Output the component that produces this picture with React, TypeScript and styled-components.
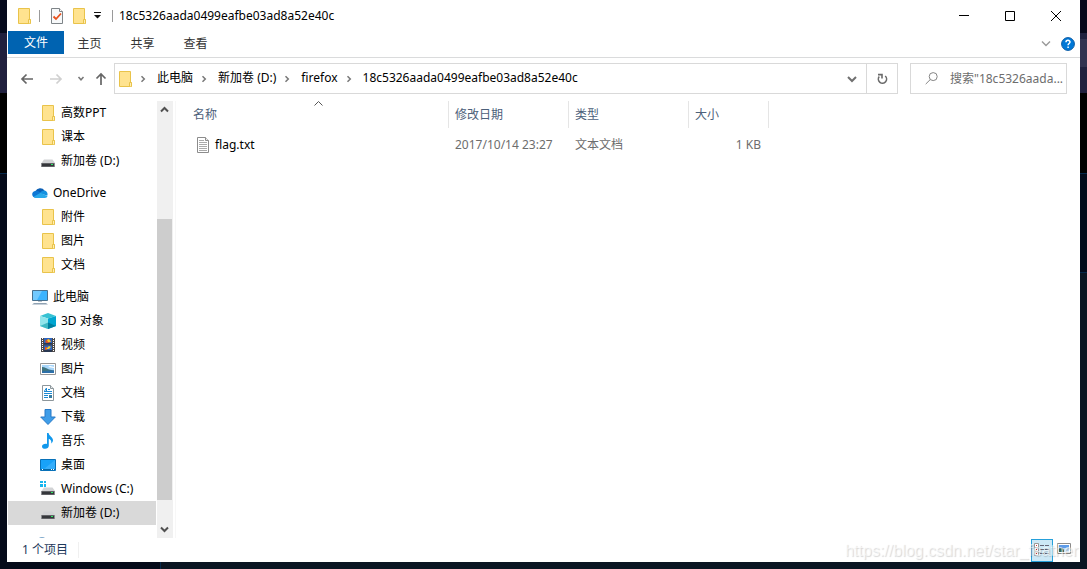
import React from "react";
import styled, { createGlobalStyle } from "styled-components";

const GlobalStyle = createGlobalStyle`
  * { box-sizing: border-box; }
  body { margin: 0; background: #040a19; }
  body, button, input, table {
    font-family: "Noto Sans", "Noto Sans CJK SC", sans-serif;
    font-size: 12px;
    line-height: 16px;
  }
  button { margin: 0; padding: 0; border: 0; background: none; color: inherit; }
  a { color: inherit; text-decoration: none; }
  ul, ol { margin: 0; padding: 0; list-style: none; }
  svg { display: block; flex: none; }
`;

const Desktop = styled.div`
  height: 100vh;
  padding: 0 7px 7px;
  background:
    linear-gradient(#07071a 33px, #20203e 33px 39px, #323250 39px 67px, #20203e 67px 93px, #000 93px 173px, #06284a 173px 174px, #020a1a 174px 272px, #06284a 272px 273px, #0a1522 273px) right / 7px 100% no-repeat,
    linear-gradient(#050a1c 33px, #20203e 33px 93px, #000 93px 173px, #06284a 173px 174px, #040a19 174px) left / 7px 100% no-repeat,
    linear-gradient(90deg, #040a19 160px, #06284a 160px 161px, #0a1522 161px);
`;

const Window = styled.div`
  position: relative;
  display: flex;
  flex-direction: column;
  height: 100%;
  background: #fff;
  color: #000;
`;

const TitleBar = styled.header`
  display: flex;
  align-items: center;
  justify-content: space-between;
  height: 31px;
  flex: none;
  padding-right: 1px;
`;

const QuickAccess = styled.div`
  display: flex;
  align-items: center;
  padding-left: 10px;
`;

const QuickButton = styled.button<{ $narrow?: boolean }>`
  display: flex;
  justify-content: center;
  width: ${(p) => (p.$narrow ? 14 : 22)}px;
`;

const Separator = styled.span`
  width: 1px;
  height: 12px;
  margin: 0 6px 0 8px;
  background: #9a9a9a;
`;

const Title = styled.h1`
  margin: 0;
  font-size: 12px;
  font-weight: 400;
`;

const CaptionButtons = styled.div`
  display: flex;
`;

const CaptionButton = styled.button`
  display: flex;
  align-items: center;
  justify-content: center;
  width: 46px;
  height: 31px;
`;

const Ribbon = styled.nav`
  display: flex;
  align-items: flex-start;
  height: 27px;
  flex: none;
  padding: 0 5px 0 1px;
  border-bottom: 1px solid #dadbdc;
`;

const Tab = styled.button<{ $primary?: boolean }>`
  width: ${(p) => (p.$primary ? 56 : 53)}px;
  height: 23px;
  padding: ${(p) => (p.$primary ? "0" : "2px 2px 0 0")};
  background: ${(p) => (p.$primary ? "#0063b1" : "transparent")};
  color: ${(p) => (p.$primary ? "#fff" : "#333")};
`;

const RibbonTools = styled.div`
  display: flex;
  align-items: center;
  gap: 10px;
  height: 26px;
  margin-left: auto;
`;

const AddressRow = styled.div`
  display: flex;
  align-items: stretch;
  height: 31px;
  flex: none;
  margin-top: 5px;
  padding-right: 13px;
`;

const NavButtons = styled.div`
  display: flex;
  align-items: center;
  width: 107px;
  padding-left: 9px;
  flex: none;
`;

const NavButton = styled.button<{ $width: number }>`
  display: flex;
  justify-content: center;
  width: ${(p) => p.$width}px;
`;

const AddressBox = styled.div`
  display: flex;
  align-items: center;
  flex: 1;
  min-width: 0;
  padding-left: 3px;
  border: 1px solid #d9d9d9;
`;

const Crumbs = styled.ol`
  display: flex;
  flex: 1;
  min-width: 0;
  padding-bottom: 2px;
  overflow: hidden;
`;

const Crumb = styled.li`
  display: flex;
  align-items: center;
  white-space: nowrap;
`;

const CrumbArrow = styled.span`
  display: flex;
  justify-content: center;
  width: 25px;
  padding: 2px 3px 0 0;
`;

const AddressButton = styled.button<{ $divided?: boolean }>`
  display: flex;
  align-items: center;
  justify-content: center;
  align-self: stretch;
  width: ${(p) => (p.$divided ? 31 : 28)}px;
  border-left: ${(p) => (p.$divided ? "1px solid #d9d9d9" : "0")};
`;

const SearchBox = styled.label`
  display: flex;
  align-items: center;
  gap: 12px;
  width: 157px;
  flex: none;
  margin-left: 12px;
  padding-left: 14px;
  border: 1px solid #d9d9d9;
`;

const SearchInput = styled.input`
  flex: 1;
  min-width: 0;
  padding: 0;
  border: 0;
  outline: 0;
  background: none;
  text-overflow: ellipsis;
  &::placeholder { color: #6d6d6d; opacity: 1; }
`;

const Body = styled.div`
  display: flex;
  flex: 1;
  min-height: 0;
  padding-top: 7px;
`;

const Sidebar = styled.nav`
  width: 149px;
  flex: none;
  overflow: hidden;
  padding-left: 1px;
`;

const TreeGroup = styled.ul`
  margin-bottom: 8px;
`;

const TreeRow = styled.li<{ $root?: boolean; $selected?: boolean }>`
  padding-left: ${(p) => (p.$root ? 24 : 32)}px;
  background: ${(p) => (p.$selected ? "#d9d9d9" : "transparent")};
`;

const TreeLink = styled.a`
  display: flex;
  align-items: center;
  gap: 5px;
  height: 24px;
  white-space: nowrap;
`;

const NetworkRow = styled.div`
  padding: 4px 0 0 24px;
`;

const ScrollBar = styled.div`
  display: flex;
  flex-direction: column;
  width: 17px;
  flex: none;
  margin-left: 1px;
  padding-right: 2px;
  background: linear-gradient(90deg, #f0f0f0 16px, #fff 16px);
`;

const ScrollButton = styled.button`
  display: flex;
  align-items: center;
  justify-content: center;
  height: 17px;
  flex: none;
`;

const ScrollTrack = styled.div`
  display: flex;
  flex-direction: column;
  flex: 1;
`;

const ScrollSpace = styled.div<{ $grow: number }>`
  flex: ${(p) => p.$grow};
`;

const ScrollThumb = styled.div`
  flex: 281;
  background: #cdcdcd;
`;

const FilePane = styled.main`
  flex: 1;
  min-width: 0;
  margin-left: 1px;
  padding-left: 11px;
  border-left: 1px solid #f7f7f7;
`;

const FileTable = styled.table`
  width: 582px;
  table-layout: fixed;
  border-collapse: separate;
  border-spacing: 0;
`;

const HeadCell = styled.th<{ $width: number }>`
  position: relative;
  width: ${(p) => p.$width}px;
  height: 27px;
  padding: 0 6px;
  border-right: 1px solid #e5e5e5;
  color: #4c607a;
  font-weight: 400;
  text-align: left;
`;

const SortMark = styled.span`
  position: absolute;
  top: 0;
  left: 50%;
  margin-left: -4px;
`;

const Cell = styled.td<{ $right?: boolean }>`
  height: 33px;
  padding: 0 8px 0 6px;
  color: #6d6d6d;
  text-align: ${(p) => (p.$right ? "right" : "left")};
`;

const FileName = styled.a`
  display: flex;
  align-items: center;
  gap: 5px;
  padding-left: 3px;
  color: #000;
`;

const StatusBar = styled.footer`
  display: flex;
  align-items: center;
  height: 24px;
  flex: none;
  padding: 0 9px 0 15px;
  color: #1e395b;
`;

const StatusText = styled.span`
  padding-right: 10px;
  border-right: 1px solid #f0f0f0;
`;

const ViewButtons = styled.div`
  display: flex;
  align-items: center;
  gap: 4px;
  margin-left: auto;
`;

const ViewButton = styled.button<{ $active?: boolean }>`
  display: flex;
  align-items: center;
  justify-content: center;
  width: ${(p) => (p.$active ? 22 : 14)}px;
  height: ${(p) => (p.$active ? 23 : 19)}px;
  margin-bottom: ${(p) => (p.$active ? 0 : 4)}px;
  border: ${(p) => (p.$active ? "1px solid #26a0da" : "0")};
  background: ${(p) => (p.$active ? "#cce8f6" : "transparent")};
`;

const Watermark = styled.span`
  position: absolute;
  right: 2px;
  bottom: 1px;
  color: rgba(255, 255, 255, 0.6);
  font-family: "Liberation Sans", Arial, sans-serif;
  font-size: 16px;
  line-height: 20px;
  text-shadow: 1px 1px 1px rgba(0, 0, 0, 0.16);
  pointer-events: none;
`;

const Folder = ({ width = 16 }: { width?: number }) => (
  <svg width={width} height="16" viewBox={width === 16 ? "0 0 16 16" : "1 0 14 16"}>
    <path d="M2.5.5h11v11.2h1v3.8h-12z" fill="#ffe38f" stroke="#e9c34a" />
    <path d="M12.5 15V11.5h2V15.5" fill="#ffeeb4" stroke="#e9c34a" />
  </svg>
);

const Drive = ({ windows }: { windows?: boolean }) => (
  <svg width="16" height="16" viewBox="0 0 16 16">
    {windows ? (
      <path d="M0 0h3v2H0zM4 0h2v2H4zM0 3h3v3H0zM4 3h2v3H4z" fill="#16b5ee" />
    ) : null}
    <path d="M4 6.5h8.5L15 10H1.5z" fill="#d2d3d5" />
    <path d="M1 10h14v4H1z" fill="#8b8c90" />
    <path d="M2 10.5h12v3H2z" fill="#35373b" />
    <path d="M11 11h2v1h-2z" fill="#2bea62" />
  </svg>
);

const Cloud = () => (
  <svg width="16" height="16" viewBox="0 0 16 16">
    <path d="M3.3 6.4A5.2 5.2 0 0 1 12.5 5.6L9 10z" fill="#0b5fb5" />
    <path d="M3 6c2-.7 3.8.4 5.7 1.8L4 12.8C-.8 12.6-1 6.6 3 6z" fill="#0f78d4" />
    <path d="M12.4 5.6a3.6 3.6 0 0 1 2.8 5.1L8 8.2c.9-1.7 2.6-2.8 4.4-2.6z" fill="#1490df" />
    <path d="M1.7 11.8 8.6 7.7l6.9 3.5c-.4 1-1.3 1.7-2.6 1.7H3.8c-.9 0-1.6-.5-2.1-1.1z" fill="#28a8ea" />
  </svg>
);

const Computer = () => (
  <svg width="16" height="16" viewBox="0 0 16 16">
    <path d="M.5 1.5h15v10H.5z" fill="#3cb4ff" stroke="#49718f" />
    <path d="M1 2h9L5 11H1z" fill="#72caff" />
    <path d="M6 12h4v1H6z" fill="#b5c2cc" />
    <path d="M2 14h12l2 1.5H0z" fill="#8fa2b3" />
  </svg>
);

const Cube = () => (
  <svg width="16" height="16" viewBox="0 0 16 16">
    <path d="M8 0 16 3 8 5.5 0 3z" fill="#36c2d3" />
    <path d="M0 3l8 2.5V16l-8-3z" fill="#91e5eb" />
    <path d="M8 5.5 16 3v10l-8 3z" fill="#00a5d0" />
    <path d="M0 13l8-3.5V16z" fill="#3fb9c4" />
    <path d="M8 9.5l8 3.5-8 3z" fill="#007f9e" />
  </svg>
);

const Film = () => (
  <svg width="16" height="16" viewBox="0 0 16 16">
    <path d="M1 1h14v14H1z" fill="#4d4949" />
    <path d="M2.5 1v14M13.5 1v14" stroke="#fff" strokeDasharray="1 1" />
    <path d="M4 1h8v6.5H4zM4 8.5h8V15H4z" fill="#2d65bf" />
    <path d="M5 4l3-2 3 2-2 2H6zM5 10h2v3H5z" fill="#d65528" />
    <path d="M7 3l2-1 2 3H8zM6 12l3-3 2 1-2 2z" fill="#f2cb31" />
    <path d="M4 6h8v1.5H4zM4 13h8v2H4z" fill="#293852" />
  </svg>
);

const Picture = () => (
  <svg width="16" height="16" viewBox="0 0 16 16">
    <path d="M.5 2.5h15v11H.5z" fill="#fff" stroke="#969696" />
    <path d="M2 4h12v8H2z" fill="#a8d6fa" />
    <path d="M2 6c3 0 5 1.5 7 2.5l5 1V12H2z" fill="#3f7480" />
    <path d="M2 10.5c5-1 8-1 12-1V12H2z" fill="#2c6fa9" />
    <path d="M8 6l2-1 4 1v1z" fill="#fff" />
  </svg>
);

const Document = () => (
  <svg width="16" height="16" viewBox="0 0 16 16">
    <path d="M2.5.5h8l3 3v12h-11z" fill="#fff" stroke="#8d969b" />
    <path d="M10.5.5v3h3" fill="#e3e8ea" stroke="#8d969b" />
    <path d="M4.5 6 6.5 3v3M4 6.5h8M4 8.5h8M8 4.5h2M4 10.5h4M4 12.5h4" fill="none" stroke="#1d8ad4" />
    <path d="M9 10h3v3H9z" fill="#377da2" />
  </svg>
);

const Download = () => (
  <svg width="16" height="16" viewBox="0 0 16 16">
    <path d="M5 .5h6V8h4.3L8 15.5.7 8H5z" fill="#3f9de8" stroke="#2779c7" />
  </svg>
);

const Music = () => (
  <svg width="16" height="16" viewBox="0 0 16 16">
    <path d="M7 0h1.6c.2 3 4.8 4.2 4.4 7.6-.2 1.5-1 2.4-1.8 3 .7-2.3-.6-4-2.4-4.8v7c0 1.8-1.7 3-3.6 3-2 0-3.2-1-3.2-2.4 0-1.9 2.5-3.1 5-2.5z" fill="#1198ec" />
  </svg>
);

const DesktopIcon = () => (
  <svg width="16" height="16" viewBox="0 0 16 16">
    <path d="M.5 2.5h15v11H.5z" fill="#18a2f8" stroke="#0871b8" />
    <path d="M15 3v9L4 12z" fill="#35aefb" />
    <path d="M1 12h14v1H1z" fill="#0668a5" />
    <path d="M2 12h1v1H2zM11 12h1v1h-1zM13 12h1v1h-1z" fill="#fff" />
  </svg>
);

const TextFile = () => (
  <svg width="14" height="16" viewBox="0 0 14 16">
    <path d="M1.5.5h8l3 3v12h-11z" fill="#fff" stroke="#8c8c8c" />
    <path d="M9.5.5v3h3" fill="#eee" stroke="#8c8c8c" />
    <path d="M3 3.5h5M3 5.5h8M3 7.5h8M3 9.5h8M3 11.5h8M3 13.5h8" stroke="#aaa" />
  </svg>
);

const Checked = () => (
  <svg width="14" height="16" viewBox="0 0 14 16">
    <path d="M1.5.5h8l3 3v12h-11z" fill="#f7f9fa" stroke="#7e8488" />
    <path d="M9.5.5v3h3" fill="#fff" stroke="#7e8488" />
    <path d="M3.5 8.5 6 11l5-5.5" fill="none" stroke="#e8511d" strokeWidth="1.8" />
  </svg>
);

type StrokeProps = { d: string; w?: number; h?: number; color?: string; weight?: number };
const Stroke = ({ d, w = 8, h = 8, color = "#777", weight = 1.5 }: StrokeProps) => (
  <svg width={w} height={h} viewBox={`0 0 ${w} ${h}`} fill="none" stroke={color} strokeWidth={weight}>
    <path d={d} />
  </svg>
);

type Item = { label: string; icon: React.ReactNode; selected?: boolean };
const groups: Item[][] = [
  [
    { label: "高数PPT", icon: <Folder /> },
    { label: "课本", icon: <Folder /> },
    { label: "新加卷 (D:)", icon: <Drive /> },
  ],
  [
    { label: "OneDrive", icon: <Cloud /> },
    { label: "附件", icon: <Folder /> },
    { label: "图片", icon: <Folder /> },
    { label: "文档", icon: <Folder /> },
  ],
  [
    { label: "此电脑", icon: <Computer /> },
    { label: "3D 对象", icon: <Cube /> },
    { label: "视频", icon: <Film /> },
    { label: "图片", icon: <Picture /> },
    { label: "文档", icon: <Document /> },
    { label: "下载", icon: <Download /> },
    { label: "音乐", icon: <Music /> },
    { label: "桌面", icon: <DesktopIcon /> },
    { label: "Windows (C:)", icon: <Drive windows /> },
    { label: "新加卷 (D:)", icon: <Drive />, selected: true },
  ],
];

const folderName = "18c5326aada0499eafbe03ad8a52e40c";
const crumbs = ["此电脑", "新加卷 (D:)", "firefox", folderName];

export default function App() {
  return (
    <Desktop>
      <GlobalStyle />
      <Window>
        <TitleBar>
          <QuickAccess>
            <Folder width={14} />
            <Separator />
            <QuickButton aria-label="属性"><Checked /></QuickButton>
            <QuickButton aria-label="新建文件夹"><Folder width={14} /></QuickButton>
            <QuickButton $narrow aria-label="自定义快速访问工具栏">
              <svg width="7" height="7" viewBox="0 0 7 7">
                <path d="M0 0h7v1H0zM0 3h7L3.5 6.5z" fill="#111" />
              </svg>
            </QuickButton>
            <Separator />
            <Title>{folderName}</Title>
          </QuickAccess>
          <CaptionButtons>
            <CaptionButton aria-label="最小化"><Stroke w={10} h={10} color="#000" weight={1} d="M0 4.5h10" /></CaptionButton>
            <CaptionButton aria-label="最大化"><Stroke w={10} h={10} color="#000" weight={1} d="M.5.5h9v9h-9z" /></CaptionButton>
            <CaptionButton aria-label="关闭"><Stroke w={10} h={10} color="#000" weight={1} d="M0 0l10 10M10 0 0 10" /></CaptionButton>
          </CaptionButtons>
        </TitleBar>

        <Ribbon>
          <Tab $primary>文件</Tab>
          <Tab>主页</Tab>
          <Tab>共享</Tab>
          <Tab>查看</Tab>
          <RibbonTools>
            <button aria-label="展开功能区"><Stroke w={10} h={6} color="#999" weight={1.4} d="M1 .5 5 4.5 9 .5" /></button>
            <button aria-label="帮助">
              <svg width="14" height="14" viewBox="0 0 14 14">
                <circle cx="7" cy="7" r="6.4" fill="#0078d7" stroke="#0a5ba5" />
                <path d="M5 5.3c0-2.6 4-2.5 4-.2 0 1.5-1.9 1.4-1.9 3.2M7.1 9.4v1.6" fill="none" stroke="#fff" strokeWidth="1.5" />
              </svg>
            </button>
          </RibbonTools>
        </Ribbon>

        <AddressRow>
          <NavButtons>
            <NavButton $width={22} aria-label="后退"><Stroke w={14} h={12} color="#666" weight={1.7} d="M13 6H2M6.5 1.5 2 6l4.5 4.5" /></NavButton>
            <NavButton $width={36} aria-label="前进"><Stroke w={14} h={12} color="#d0d0d0" weight={1.7} d="M1 6h11M7.5 1.5 12 6l-4.5 4.5" /></NavButton>
            <NavButton $width={14} aria-label="最近位置"><Stroke w={8} h={6} d="M1.5 1 4 3.8 6.5 1" /></NavButton>
            <NavButton $width={26} aria-label="上移"><Stroke w={12} h={14} color="#666" weight={1.7} d="M6 13V2M1.5 6.5 6 2l4.5 4.5" /></NavButton>
          </NavButtons>
          <AddressBox>
            <Folder width={14} />
            <Crumbs>
              {crumbs.map((name) => (
                <Crumb key={name}>
                  <CrumbArrow><Stroke w={6} h={8} d="M1.5 1.2 4.3 4 1.5 6.8" /></CrumbArrow>
                  <a href="#">{name}</a>
                </Crumb>
              ))}
            </Crumbs>
            <AddressButton aria-label="历史记录"><Stroke w={10} h={8} weight={2} color="#707070" d="M1 2 5 6 9 2" /></AddressButton>
            <AddressButton $divided aria-label="刷新">
              <svg width="11" height="12" viewBox="0 0 11 12" fill="none" stroke="#6b6b6b" strokeWidth="1.6">
                <path d="M8.2 3A4.1 4.1 0 1 1 2.2 3.6" />
                <path d="M1 1.6h4v4" />
              </svg>
            </AddressButton>
          </AddressBox>
          <SearchBox>
            <svg width="13" height="13" viewBox="0 0 13 13" fill="none" stroke="#858585">
              <circle cx="8.2" cy="4.6" r="4" />
              <path d="M5.3 7.5.7 12.1" />
            </svg>
            <SearchInput aria-label="搜索" placeholder={'搜索"18c5326aada...'} />
          </SearchBox>
        </AddressRow>

        <Body>
          <Sidebar>
            {groups.map((items, g) => (
              <TreeGroup key={g}>
                {items.map((item, i) => (
                  <TreeRow key={item.label} $root={g > 0 && i === 0} $selected={item.selected}>
                    <TreeLink href="#">{item.icon}{item.label}</TreeLink>
                  </TreeRow>
                ))}
              </TreeGroup>
            ))}
            <NetworkRow>
              <svg width="16" height="16" viewBox="0 0 16 16">
                <circle cx="10" cy="4" r="4" fill="#7fa9cc" />
              </svg>
            </NetworkRow>
          </Sidebar>
          <ScrollBar>
            <ScrollButton aria-label="向上滚动"><Stroke w={9} h={7} weight={2} color="#505050" d="M1 5.5 4.5 2 8 5.5" /></ScrollButton>
            <ScrollTrack>
              <ScrollSpace $grow={101} />
              <ScrollThumb />
              <ScrollSpace $grow={21} />
            </ScrollTrack>
            <ScrollButton aria-label="向下滚动"><Stroke w={9} h={7} weight={2} color="#505050" d="M1 1.5 4.5 5 8 1.5" /></ScrollButton>
          </ScrollBar>
          <FilePane>
            <FileTable>
              <thead>
                <tr>
                  <HeadCell $width={262}>
                    名称
                    <SortMark><Stroke w={9} h={5} weight={1} color="#555" d="M.5 4.5l4-4 4 4" /></SortMark>
                  </HeadCell>
                  <HeadCell $width={120}>修改日期</HeadCell>
                  <HeadCell $width={120}>类型</HeadCell>
                  <HeadCell $width={80}>大小</HeadCell>
                </tr>
              </thead>
              <tbody>
                <tr>
                  <Cell><FileName href="#"><TextFile />flag.txt</FileName></Cell>
                  <Cell>2017/10/14 23:27</Cell>
                  <Cell>文本文档</Cell>
                  <Cell $right>1 KB</Cell>
                </tr>
              </tbody>
            </FileTable>
          </FilePane>
        </Body>

        <StatusBar>
          <StatusText>1 个项目</StatusText>
          <ViewButtons>
            <ViewButton $active aria-label="详细信息">
              <svg width="16" height="14" viewBox="0 0 16 14" fill="none">
                <path d="M.5.5h4v4h-4zM.5 4.5h4v4h-4zM.5 8.5h4v4h-4z" fill="#fff" stroke="#999" />
                <path d="M2 2.5h1M2 6.5h1M2 10.5h1" stroke="#c33" />
                <path d="M6 2.5h4M11 2.5h4M6 6.5h4M11 6.5h4M6 10.5h4M11 10.5h4" stroke="#667" />
              </svg>
            </ViewButton>
            <ViewButton aria-label="大缩略图">
              <svg width="14" height="11" viewBox="0 0 14 11">
                <path d="M.5.5h13v10H.5z" fill="#fff" stroke="#8a8a8a" />
                <path d="M2 2h10v7H2z" fill="#b9d9f6" />
                <path d="M2 2h10v3H2z" fill="#5d9be8" />
                <path d="M2 5h3l2 2v2H2z" fill="#376a5c" />
              </svg>
            </ViewButton>
          </ViewButtons>
        </StatusBar>
        <Watermark>https://blog.csdn.net/star_feather</Watermark>
      </Window>
    </Desktop>
  );
}
